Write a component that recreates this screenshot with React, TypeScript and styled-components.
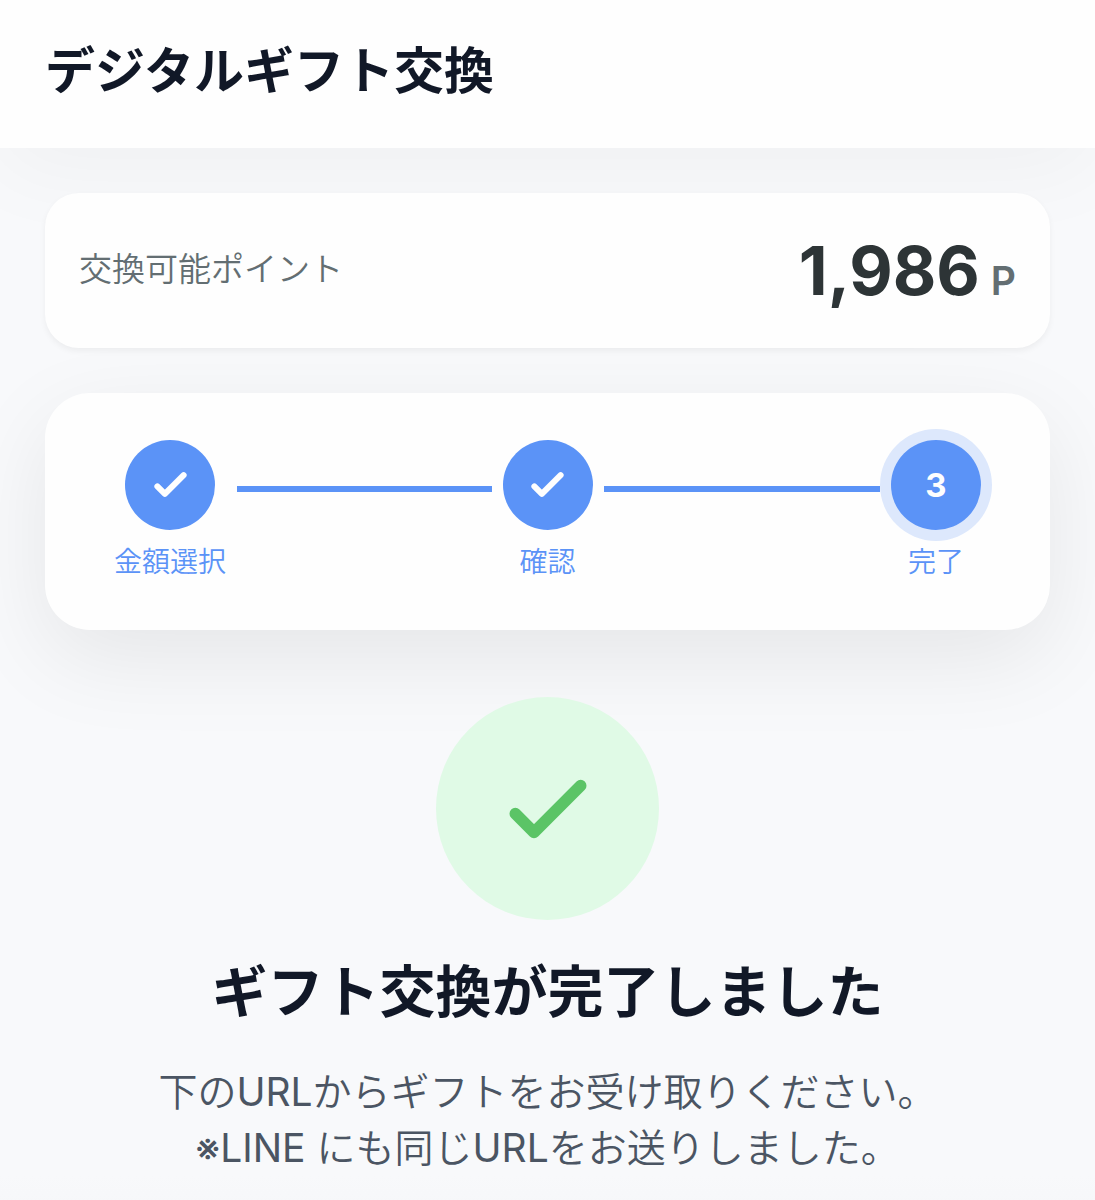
import React from "react";
import styled, { createGlobalStyle } from "styled-components";

const GlobalStyle = createGlobalStyle`
  *, *::before, *::after { box-sizing: border-box; }
  html { background: #f8f9fb; }
  body {
    margin: 0;
    background: #f8f9fb;
    font-family: Inter, "Noto Sans CJK JP", sans-serif;
    color: #111827;
    -webkit-font-smoothing: antialiased;
  }
`;

const Page = styled.div`
  display: flex;
  flex-direction: column;
  overflow: hidden;
`;

const Header = styled.header`
  padding: 36px 45px 42px;
  background: #fefefe;
  box-shadow: 0 22px 90px rgba(0, 0, 0, 0.04);
`;

const PageTitle = styled.h1`
  margin: 0;
  font-size: 50px;
  line-height: 70px;
  font-weight: 600;
`;

const Content = styled.main`
  display: flex;
  flex-direction: column;
  gap: 45px;
  padding: 45px 45px 0;
`;

const PointsCard = styled.section`
  display: flex;
  align-items: center;
  justify-content: space-between;
  height: 155px;
  padding: 0 34px;
  border-radius: 34px;
  background: #fefefe;
  box-shadow: 0 3px 6px rgba(0, 0, 0, 0.05);
`;

const PointsLabel = styled.span`
  padding-bottom: 4px;
  font-size: 33px;
  line-height: 44px;
  font-weight: 350;
  color: #636e72;
`;

const PointsValue = styled.span`
  display: flex;
  align-items: baseline;
  gap: 11px;
  padding-top: 11px;
  font-size: 67px;
  line-height: 78px;
  font-weight: 700;
  color: #2d3436;
`;

const PointsUnit = styled.span`
  font-size: 39px;
  font-weight: 600;
  color: #636e72;
`;

const StepsCard = styled.ol`
  display: grid;
  grid-template-columns: 1fr auto 1fr;
  column-gap: 11px;
  margin: 0;
  padding: 47px 69px 49px;
  list-style: none;
  border-radius: 45px;
  background: #fefefe;
  box-shadow: 0 28px 90px rgba(0, 0, 0, 0.08);
`;

const StepItem = styled.li`
  display: flex;
  align-items: flex-start;
  gap: 11px;
`;

const Step = styled.div`
  display: flex;
  flex-direction: column;
  align-items: center;
  gap: 13px;
`;

const StepCircle = styled.span<{ $current?: boolean }>`
  display: flex;
  align-items: center;
  justify-content: center;
  width: 90px;
  height: 90px;
  padding-bottom: 1px;
  border-radius: 50%;
  background: #5b93f7;
  color: #fefefe;
  font-size: 33px;
  line-height: 40px;
  font-weight: 700;
  box-shadow: ${({ $current }) => ($current ? "0 0 0 11px #dde8fc" : "none")};
`;

const StepLabel = styled.span`
  font-size: 28px;
  line-height: 38px;
  font-weight: 350;
  white-space: nowrap;
  color: #5b93f7;
`;

const Connector = styled.span`
  flex: 1;
  height: 6px;
  margin-top: 46px;
  background: #5b93f7;
`;

const Result = styled.section`
  display: flex;
  flex-direction: column;
  align-items: center;
  padding-top: 22px;
  text-align: center;
`;

const SuccessBadge = styled.div`
  display: flex;
  align-items: center;
  justify-content: center;
  width: 223px;
  height: 223px;
  border-radius: 50%;
  background: #e0fae6;
  color: #5bc466;
`;

const ResultTitle = styled.h2`
  margin: 33px 0 0;
  font-size: 56px;
  line-height: 78px;
  font-weight: 600;
`;

const ResultText = styled.p`
  margin: 33px 0 0;
  font-size: 39px;
  line-height: 56px;
  font-weight: 350;
  color: #4b5563;
`;

const Latin = styled.span`
  font-weight: 400;
`;

const BottomShade = styled.div`
  height: 34px;
  background: linear-gradient(#f8f9fb, #f6f7f9);
`;

const CheckIcon = ({ size, stroke }: { size: number; stroke: number }) => (
  <svg
    width={size}
    height={size}
    viewBox="0 0 24 24"
    fill="none"
    stroke="currentColor"
    strokeWidth={stroke}
    strokeLinecap="round"
    strokeLinejoin="round"
    aria-hidden="true"
  >
    <path d="M5 13l4 4L19 7" />
  </svg>
);

export default function App() {
  return (
    <>
      <GlobalStyle />
      <Page lang="ja">
        <Header>
          <PageTitle>デジタルギフト交換</PageTitle>
        </Header>
        <Content>
          <PointsCard>
            <PointsLabel>交換可能ポイント</PointsLabel>
            <PointsValue>
              1,986<PointsUnit>P</PointsUnit>
            </PointsValue>
          </PointsCard>
          <StepsCard>
            <StepItem>
              <Step>
                <StepCircle><CheckIcon size={45} stroke={3.2} /></StepCircle>
                <StepLabel>金額選択</StepLabel>
              </Step>
              <Connector />
            </StepItem>
            <StepItem>
              <Step>
                <StepCircle><CheckIcon size={45} stroke={3.2} /></StepCircle>
                <StepLabel>確認</StepLabel>
              </Step>
            </StepItem>
            <StepItem aria-current="step">
              <Connector />
              <Step>
                <StepCircle $current>3</StepCircle>
                <StepLabel>完了</StepLabel>
              </Step>
            </StepItem>
          </StepsCard>
          <Result>
            <SuccessBadge><CheckIcon size={112} stroke={2.5} /></SuccessBadge>
            <ResultTitle>ギフト交換が完了しました</ResultTitle>
            <ResultText>
              下の<Latin>URL</Latin>からギフトをお受け取りください。
              <br />
              <Latin>※LINE</Latin> にも同じ<Latin>URL</Latin>をお送りしました。
            </ResultText>
          </Result>
        </Content>
        <BottomShade />
      </Page>
    </>
  );
}
